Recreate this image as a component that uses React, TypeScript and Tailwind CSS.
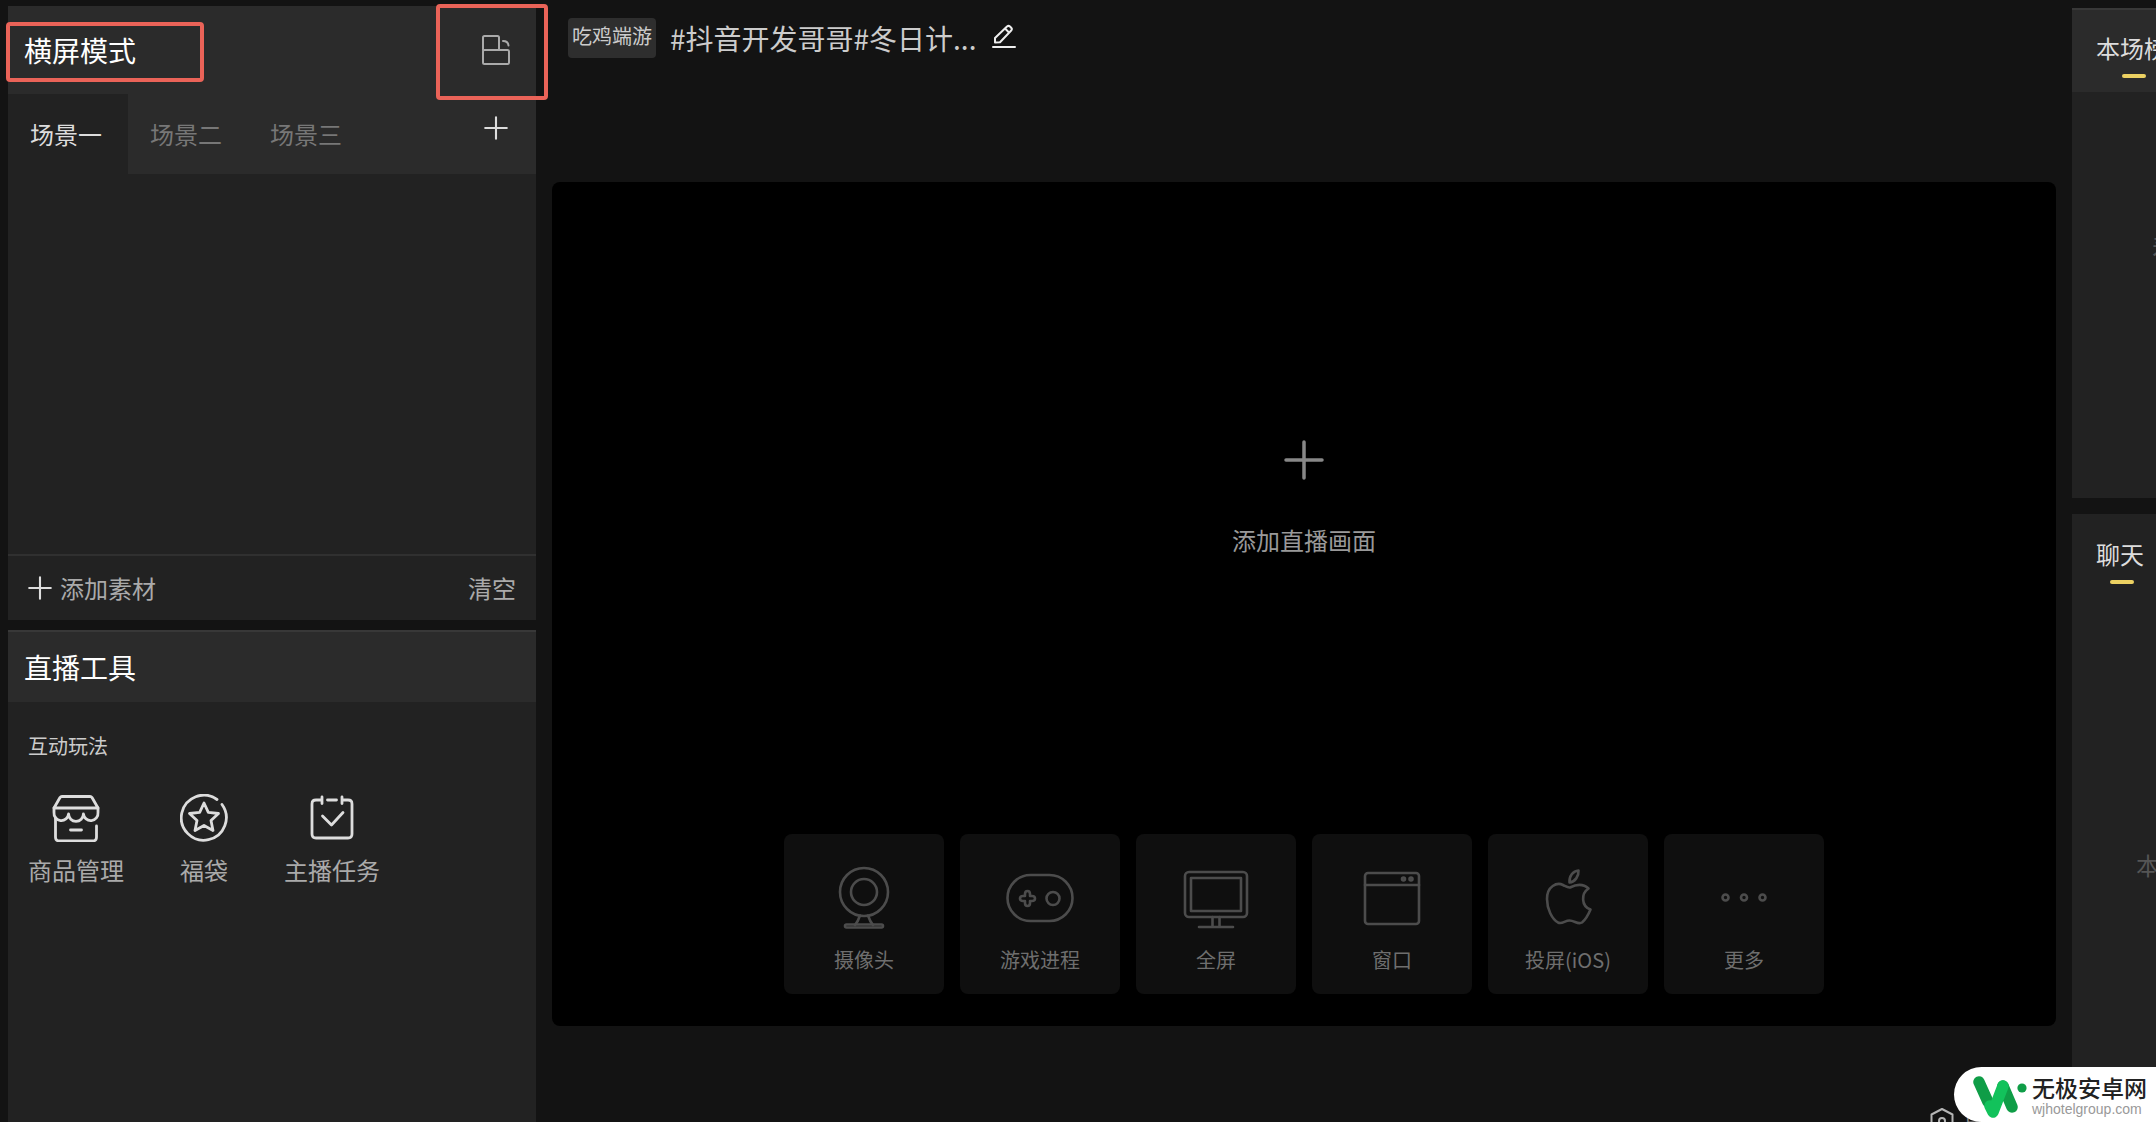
import React from "react";

interface IconProps {
  className?: string;
}

interface Tool {
  label: string;
  icon: React.ReactNode;
}

function Plus({ className }: IconProps) {
  return (
    <svg className={className} viewBox="0 0 40 40" fill="none" stroke="currentColor" strokeWidth={3.5} strokeLinecap="round">
      <path d="M20 2v36M2 20h36" />
    </svg>
  );
}

// Troca entre modo paisagem e retrato
function RotateIcon() {
  return (
    <svg className="h-8 w-8" viewBox="0 0 32 32" fill="none" stroke="currentColor" strokeWidth={2} strokeLinejoin="round" strokeLinecap="round">
      <path d="M3 16V3.500Q3 2 4.500 2H17.500Q19 2 19 3.500V16" />
      <rect x="3" y="16" width="26" height="14" rx="1.500" />
      <path d="M23 7q5 0 5.500 4.500" />
    </svg>
  );
}

function PencilIcon() {
  return (
    <svg className="h-6 w-6" viewBox="0 0 24 24" fill="none" stroke="currentColor" strokeWidth={2} strokeLinejoin="round" strokeLinecap="round">
      <path d="M3 18.500V14L15 2.500Q16.500 1.300 18 2.500L19.200 3.700Q20.500 5 19.200 6.500L8 18.200Z" />
      <path d="M13.500 5l3 3M1 23h22" />
    </svg>
  );
}

const tools: Tool[] = [
  {
    label: "商品管理",
    icon: (
      <>
        <path d="M2 14L8 3.500Q8.700 2.500 10 2.500H38Q39.300 2.500 40 3.500L46 14Z" />
        <path d="M2 14v4.500a7.300 7.300 0 0 0 14.600 1.500a7.400 7.400 0 0 0 14.800 0A7.300 7.300 0 0 0 46 18.500V14" />
        <path d="M3.500 24v19Q3.500 47 7.500 47h33Q44.500 47 44.500 43V32M18.500 36h11" />
      </>
    ),
  },
  {
    label: "福袋",
    icon: (
      <>
        <path d="M37 5.500A22.500 22.500 0 1 0 42 10.500" />
        <path d="M24 9l4.300 9.300 10.200 1.200-7.500 7 2 10-9-5-9 5 2-10-7.500-7 10.200-1.200Z" />
      </>
    ),
  },
  {
    label: "主播任务",
    icon: (
      <>
        <path d="M14 3v6.500M34 3v6.500M14 6H8Q4 6 4 10v30Q4 44 8 44h32Q44 44 44 40V10Q44 6 40 6H34M19.500 6h9" />
        <path d="M14.500 22l9 9L35 18.500" />
      </>
    ),
  },
];

const sources: Tool[] = [
  {
    label: "摄像头",
    icon: (
      <>
        <circle cx="32" cy="26" r="24" />
        <circle cx="32" cy="26" r="13" />
        <path d="M28 49.500q-2 6-5 9.500M36 49.500q2 6 5 9.500" />
        <rect x="13" y="58.500" width="38" height="3" rx="1.500" />
      </>
    ),
  },
  {
    label: "游戏进程",
    icon: (
      <>
        <rect x="-0.500" y="9" width="65" height="46" rx="23" />
        <path d="M17 28q0-3 2.500-3t2.500 3v2h2q3 0 3 2.500t-3 2.500h-2v2q0 3-2.500 3t-2.500-3v-2h-2q-3 0-3-2.500t3-2.500h2Z" />
        <circle cx="45" cy="32.500" r="6.500" />
      </>
    ),
  },
  {
    label: "全屏",
    icon: (
      <>
        <rect x="1" y="6" width="62" height="45" rx="4" />
        <rect x="7" y="12" width="50" height="33" />
        <path d="M28.500 51v9M35.500 51v9M15 61h34" />
      </>
    ),
  },
  {
    label: "窗口",
    icon: (
      <>
        <rect x="5" y="7" width="54" height="51" rx="3" />
        <path d="M5 19h54" />
        <circle cx="43.500" cy="13" r="1.500" />
        <circle cx="51" cy="13" r="1.500" />
      </>
    ),
  },
  {
    label: "投屏(iOS)",
    icon: (
      <>
        <path d="M34 21.500C39 19 46 16.500 52.500 22.500C45 27.500 45 40 54.500 43.500C52 49.500 48.500 54.500 46 56.500C42 59 38.500 54.500 33.500 54.500C29 54.500 26 58.500 22 56.500C16 53 11 43 11 33C11 20 21 16 27 19C30 20.500 32 22 34 21.500Z" />
        <path d="M33.500 16.500C33 10 37 5 42.500 4.500C43 10 39 16 33.500 16.500Z" />
      </>
    ),
  },
  {
    label: "更多",
    icon: (
      <>
        <circle cx="13.500" cy="31.500" r="3" />
        <circle cx="32" cy="31.500" r="3" />
        <circle cx="50.500" cy="31.500" r="3" />
      </>
    ),
  },
];

const scenes = ["场景一", "场景二", "场景三"];

function ScenePanel() {
  return (
    <section className="relative flex h-[614px] flex-col bg-[#222]">
      <header className="flex h-[88px] items-center justify-between bg-[#2b2b2b] pr-6 pl-4">
        <h2 className="text-[28px] leading-10 text-white">横屏模式</h2>
        <button type="button" aria-label="切换横竖屏" className="text-[#aaa]">
          <RotateIcon />
        </button>
      </header>
      <nav className="flex h-20 items-center bg-[#2b2b2b] text-2xl text-[#777]">
        {scenes.map((scene, i) => (
          <button
            key={scene}
            type="button"
            className={i === 0 ? "h-20 w-[120px] bg-[#222] pr-1 text-[#ddd]" : "h-20 w-[120px] pr-1"}
          >
            {scene}
          </button>
        ))}
        <button type="button" aria-label="新建场景" className="mr-7 mb-3 ml-auto text-[#ddd]">
          <Plus className="h-6 w-6" />
        </button>
      </nav>
      <div className="flex-1" />
      <footer className="flex h-[66px] items-center justify-between border-t-2 border-[#303030] px-5 text-2xl text-[#aaa]">
        <button type="button" className="flex items-center gap-2">
          <Plus className="h-6 w-6 text-[#ddd]" />
          添加素材
        </button>
        <button type="button">清空</button>
      </footer>
      {/* Marcações em vermelho */}
      <div className="absolute top-4 -left-0.5 h-[60px] w-[198px] rounded-sm border-4 border-[#ea6358]" />
      <div className="absolute -top-0.5 -right-3 h-24 w-28 rounded-sm border-4 border-[#ea6358]" />
    </section>
  );
}

function ToolsPanel() {
  return (
    <section className="flex-1 bg-[#222]">
      <header className="flex h-[72px] items-center border-t-2 border-[#383838] bg-[#2b2b2b] px-4">
        <h2 className="text-[28px] leading-10 text-white">直播工具</h2>
      </header>
      <h3 className="mt-7 px-5 text-xl leading-8 text-[#ccc]">互动玩法</h3>
      <div className="mt-8 flex px-1">
        {tools.map((tool) => (
          <button key={tool.label} type="button" className="flex w-32 flex-col items-center gap-3 text-2xl text-[#aaa]">
            <svg className="h-12 w-12 text-[#ddd]" viewBox="0 0 48 48" fill="none" stroke="currentColor" strokeWidth={2.800} strokeLinecap="round" strokeLinejoin="round">
              {tool.icon}
            </svg>
            {tool.label}
          </button>
        ))}
      </div>
    </section>
  );
}

function Stage() {
  return (
    <main className="flex min-w-0 flex-1 flex-col">
      <div className="flex h-[182px] items-start px-4 pt-[18px]">
        <span className="flex h-10 w-[88px] items-center justify-center rounded bg-[#2e2e2e] pb-1 text-xl text-[#ccc]">
          吃鸡端游
        </span>
        <h1 className="ml-3.5 text-[28px] leading-10 text-[#ccc]">#抖音开发哥哥#冬日计...</h1>
        <button type="button" aria-label="编辑标题" className="mt-1.5 ml-4 text-[#eee]">
          <PencilIcon />
        </button>
      </div>
      <div className="flex h-[844px] flex-col items-center justify-between rounded-lg bg-black pt-[258px] pb-8">
        <button type="button" className="flex flex-col items-center gap-11 text-2xl text-[#999]">
          <Plus className="h-10 w-10 text-[#888]" />
          添加直播画面
        </button>
        <div className="flex gap-4">
          {sources.map((source) => (
            <button
              key={source.label}
              type="button"
              className="flex h-40 w-40 flex-col items-center gap-4 rounded-lg bg-[#0f0f0f] pt-8 text-xl text-[#6e6e6e]"
            >
              <svg className="h-16 w-16 overflow-visible text-[#4c4c4c]" viewBox="0 0 64 64" fill="none" stroke="currentColor" strokeWidth={2.600} strokeLinecap="round" strokeLinejoin="round">
                {source.icon}
              </svg>
              {source.label}
            </button>
          ))}
        </div>
      </div>
    </main>
  );
}

function SidePanels() {
  return (
    <aside className="flex w-[84px] shrink-0 flex-col gap-4 overflow-hidden pt-2 text-2xl whitespace-nowrap">
      <section className="h-[490px] bg-[#222]">
        <header className="h-[84px] border-t-2 border-[#383838] bg-[#2b2b2b] pt-[22px] pl-6">
          <h2 className="flex w-max flex-col items-center gap-2.5 text-[#ddd]">
            本场榜
            <span className="ml-1 h-1 w-6 rounded-full bg-[#ecd162]" />
          </h2>
        </header>
        <p className="mt-[137px] pl-20 text-[#555]">差</p>
      </section>
      <section className="flex-1 bg-[#222] pt-6 pl-6">
        <h2 className="flex w-max flex-col items-center gap-2.5 text-[#ddd]">
          聊天
          <span className="ml-1 h-1 w-6 rounded-full bg-[#ecd162]" />
        </h2>
        <p className="mt-[265px] pl-10 text-[#555]">本场</p>
      </section>
    </aside>
  );
}

// Barra de status parcialmente coberta pela marca d'água
function StatusBar() {
  return (
    <div className="absolute right-[172px] -bottom-3 flex h-7 items-start gap-2.5 text-xl leading-7 text-[#888]">
      <svg className="h-7 w-6" viewBox="0 0 24 28" fill="none" stroke="#b5b5b5" strokeWidth={2} strokeLinejoin="round">
        <path d="M12 3L22.500 8.500V20.500L12 26.500L1.500 20.500V8.500Z" />
        <circle cx="12" cy="15" r="3" />
      </svg>
      <span>目</span>
    </div>
  );
}

function Watermark() {
  return (
    <div className="absolute right-0 bottom-0 flex h-[55px] w-[202px] items-center overflow-hidden rounded-l-full bg-white pl-[18px]">
      <svg className="h-12 w-14 shrink-0" viewBox="0 0 56 48" fill="none" strokeLinecap="round" strokeLinejoin="round" strokeWidth={11.500}>
        <path d="M7 11L16 31M31 15L40 36" stroke="#0f9d47" />
        <path d="M18 35L21 41L31 15" stroke="#12c25b" />
        <circle cx="50" cy="17" r="4.600" fill="#0f9d47" />
      </svg>
      <div className="ml-1 font-['Liberation_Sans','Noto_Sans_CJK_SC',sans-serif]">
        <p className="text-[23px] leading-7 font-medium text-[#222]">无极安卓网</p>
        <p className="text-sm leading-3 text-[#999]">wjhotelgroup.com</p>
      </div>
    </div>
  );
}

export default function App() {
  return (
    <div className="relative flex min-h-screen gap-4 overflow-hidden bg-[#131313] pl-2 font-['Noto_Sans_CJK_SC',sans-serif]">
      <div className="flex w-[528px] shrink-0 flex-col gap-2.5 pt-1.5">
        <ScenePanel />
        <ToolsPanel />
      </div>
      <Stage />
      <SidePanels />
      <StatusBar />
      <Watermark />
    </div>
  );
}
